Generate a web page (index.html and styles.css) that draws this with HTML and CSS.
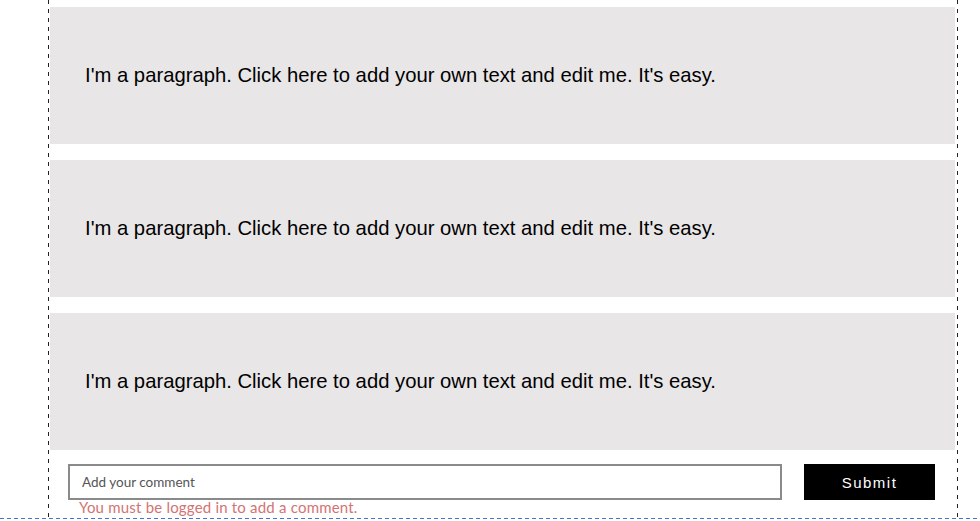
FILE: index.html
```html
<!DOCTYPE html>
<html lang="en">
<head>
    <meta charset="UTF-8">
    <meta name="viewport" content="width=device-width, initial-scale=1.0">
    <title>Paragraphs</title>
    <link rel="stylesheet" href="styles.css">
</head>
<body>
    <div class="section">
        <div class="column">
            <div class="text-box">
                <p>I'm a paragraph. Click here to add your own text and edit me. It's easy.</p>
            </div>
            <div class="text-box">
                <p>I'm a paragraph. Click here to add your own text and edit me. It's easy.</p>
            </div>
            <div class="text-box">
                <p>I'm a paragraph. Click here to add your own text and edit me. It's easy.</p>
            </div>
            <form class="comment-form">
                <div class="comment-field">
                    <input type="text" placeholder="Add your comment">
                    <p class="comment-error">You must be logged in to add a comment.</p>
                </div>
                <button type="button">Submit</button>
            </form>
        </div>
    </div>
</body>
</html>
```

FILE: styles.css
```css
body {
    font-family: "Liberation Sans", Arial, sans-serif;
    margin: 0;
    padding: 0;
    background-color: #fff;
    overflow: hidden;
}

.section {
    background-image: repeating-linear-gradient(to right, #3f78d4 0 4px, transparent 4px 7px);
    background-size: 100% 1px;
    background-position: left bottom;
    background-repeat: no-repeat;
    padding-bottom: 1px;
}

/* dashed guide lines on both sides of the column */
.column {
    margin-left: 48px;
    width: 905px;
    padding: 7px 3px 0 2px;
    background-image:
        repeating-linear-gradient(to bottom, #222 0 4px, transparent 4px 9px),
        repeating-linear-gradient(to bottom, #222 0 4px, transparent 4px 9px);
    background-size: 1px 100%, 1px 100%;
    background-position: left top, right top;
    background-repeat: no-repeat;
}

.text-box {
    height: 137px;
    margin-bottom: 16px;
    background-color: #e8e6e7;
    display: flex;
    align-items: center;
    padding-left: 35px;
}

.text-box:nth-child(3) {
    margin-bottom: 0;
}

.text-box p {
    margin: 0;
    font-size: 20.25px;
    color: #000;
}

.comment-form {
    display: flex;
    align-items: flex-start;
    gap: 22px;
    padding: 14px 0 0 18px;
    height: 54px;
}

.comment-field {
    width: 714px;
}

.comment-field input {
    display: block;
    width: 100%;
    height: 36px;
    box-sizing: border-box;
    padding: 0 12px;
    border: 2px solid #8a8a8a;
    border-radius: 0;
    font-family: "Lato", "Noto Sans", sans-serif;
    font-size: 13.5px;
    color: #333;
    outline: none;
}

.comment-field input::placeholder {
    color: #555;
}

.comment-error {
    margin: -2px 0 0;
    padding-left: 11px;
    font-family: "Lato", "Noto Sans", sans-serif;
    font-size: 15px;
    letter-spacing: 0.2px;
    line-height: 18px;
    color: #d27474;
}

.comment-form button {
    width: 131px;
    height: 36px;
    background-color: #000;
    color: #fff;
    border: none;
    border-radius: 0;
    font-family: "Liberation Sans", Arial, sans-serif;
    font-size: 15px;
    letter-spacing: 1.5px;
    cursor: pointer;
}
```
